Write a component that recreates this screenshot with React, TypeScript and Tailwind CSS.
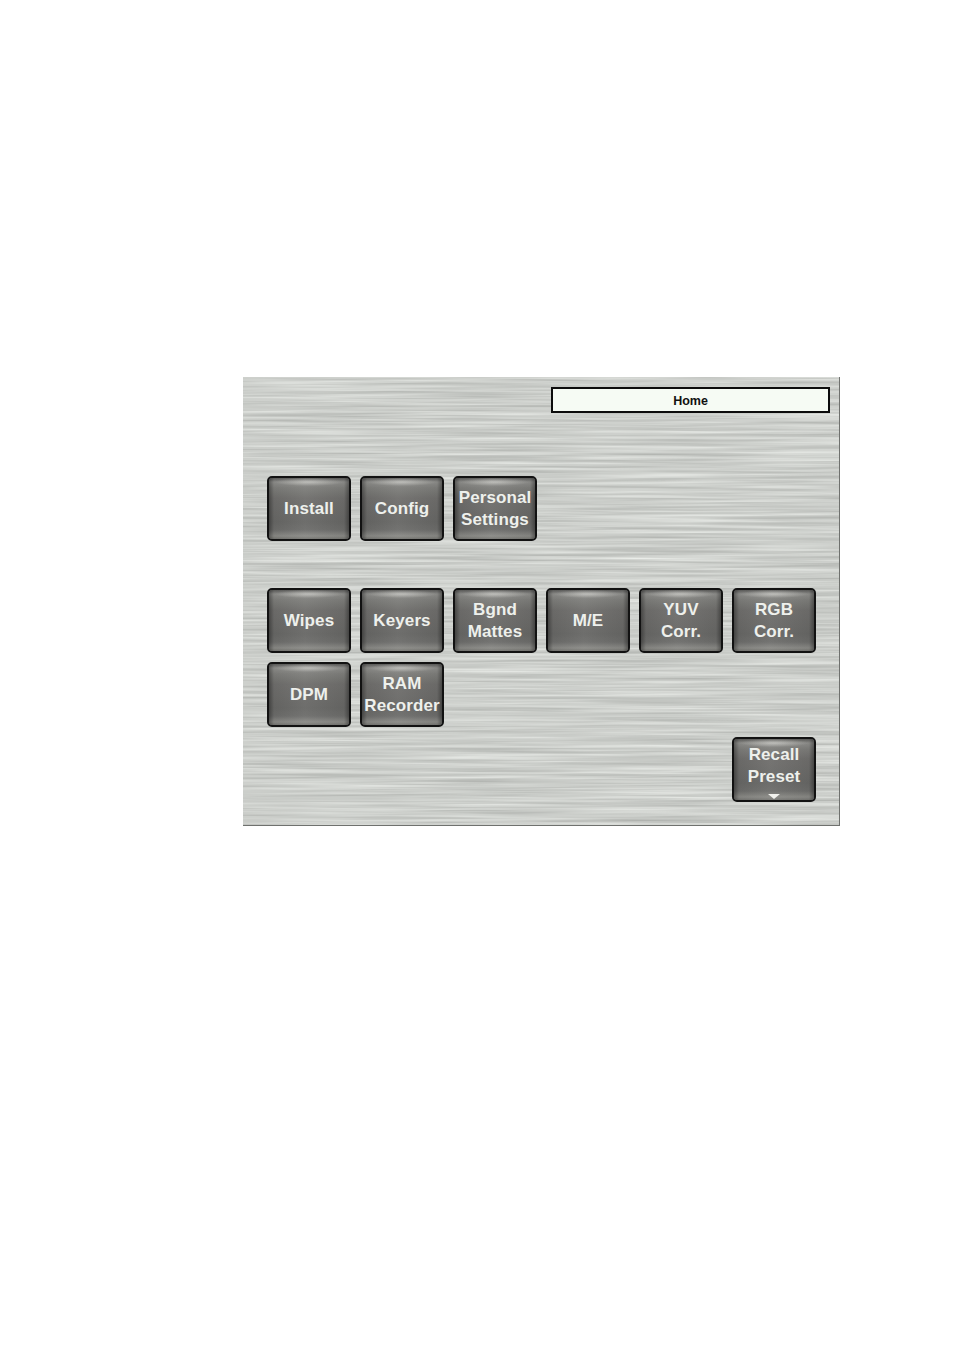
function MetalTexture() {
  return (
    <svg className="absolute inset-0 w-full h-full" aria-hidden="true">
      <filter id="brushed" x="0" y="0" width="100%" height="100%" colorInterpolationFilters="sRGB">
        <feTurbulence type="fractalNoise" baseFrequency="0.006 0.35" numOctaves="3" seed="7" />
        <feColorMatrix values="0.26 0 0 0 0.67  0.26 0 0 0 0.68  0.26 0 0 0 0.665  0 0 0 0 1" />
      </filter>
      <rect width="100%" height="100%" filter="url(#brushed)" />
    </svg>
  )
}

function PanelButton({ label, arrow }: { label: string[]; arrow?: boolean }) {
  return (
    <button className={`relative w-[84px] h-[65px] rounded-[5px] border-2 border-[#121212] bg-[#6e6e6c] overflow-hidden flex flex-col items-center justify-center font-['Liberation_Sans',sans-serif] font-bold text-[17px] leading-[22px] text-[#eef0ec] tracking-[0.1px] ${arrow ? "pb-[8px]" : "pt-[1px]"}`}>
      {/* bevel shading */}
      <span className="absolute inset-0 bg-[linear-gradient(180deg,#5c5c5a_0px,#8f8f8c_4px,#7e7e7b_10px,#706f6d_20px,#686866_44px,#6e6e6c_52px,#8b8b87_58px,#666663_63px)]" />
      <span className="absolute inset-x-[6px] top-0 h-[8px] bg-[radial-gradient(ellipse_at_center,rgba(225,225,220,0.55),rgba(225,225,220,0)_72%)]" />
      <span className="absolute inset-0 bg-[linear-gradient(90deg,rgba(0,0,0,0.36)_0px,rgba(0,0,0,0.05)_5px,rgba(255,255,255,0.04)_45%,rgba(0,0,0,0.05)_calc(100%-5px),rgba(0,0,0,0.36)_100%)]" />
      {label.map((line) => (
        <span key={line} className="relative whitespace-nowrap">
          {line}
        </span>
      ))}
      {arrow && (
        <span className="absolute bottom-[1px] left-1/2 -translate-x-1/2 w-0 h-0 border-x-[6px] border-x-transparent border-t-[5px] border-t-[#f2f2ee]" />
      )}
    </button>
  )
}

export default function App() {
  return (
    <div className="w-[954px] h-[1350px] bg-white pt-[377px] pl-[243px]">
      <div className="relative w-[597px] h-[449px] bg-[#cdcfcb] border-r border-b border-[#6f716e]">
        <MetalTexture />
        <div className="relative pt-[10px] pl-6 flex flex-col">
          <div className="flex justify-end pr-[9px]">
            <div className="w-[279px] h-[26px] border-2 border-[#0c0c0c] bg-[#f6fbf4] flex items-center justify-center pt-[2px] font-['Liberation_Sans',sans-serif] font-bold text-[12.5px] text-[#111]">
              Home
            </div>
          </div>

          <div className="flex gap-[9px] mt-[63px]">
            <PanelButton label={["Install"]} />
            <PanelButton label={["Config"]} />
            <PanelButton label={["Personal", "Settings"]} />
          </div>

          <div className="flex gap-[9px] mt-[47px]">
            <PanelButton label={["Wipes"]} />
            <PanelButton label={["Keyers"]} />
            <PanelButton label={["Bgnd", "Mattes"]} />
            <PanelButton label={["M/E"]} />
            <PanelButton label={["YUV", "Corr."]} />
            <PanelButton label={["RGB", "Corr."]} />
          </div>

          <div className="flex gap-[9px] mt-[9px]">
            <PanelButton label={["DPM"]} />
            <PanelButton label={["RAM", "Recorder"]} />
          </div>

          <div className="flex justify-end pr-[23px] mt-[10px]">
            <PanelButton label={["Recall", "Preset"]} arrow />
          </div>
        </div>
      </div>
    </div>
  )
}
